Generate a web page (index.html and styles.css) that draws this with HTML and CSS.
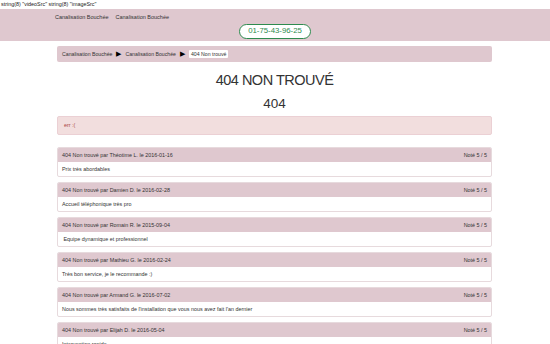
FILE: index.html
```html
<!DOCTYPE html>
<html lang="fr">
<head>
<meta charset="utf-8">
<link rel="stylesheet" href="styles.css">
</head>
<body>
<div class="debug">string(8) "videoSrc" string(8) "imageSrc"</div>
<header class="top">
  <nav class="nav">
    <a href="#">Canalisation Bouchée</a>
    <a href="#">Canalisation Bouchée</a>
  </nav>
  <div class="phone-row"><span class="phone">01-75-43-96-25</span></div>
</header>
<main class="container">
  <div class="crumbs">
    <a href="#">Canalisation Bouchée</a>
    <span class="sep">&#9654;</span>
    <a href="#">Canalisation Bouchée</a>
    <span class="sep">&#9654;</span>
    <span class="active">404 Non trouvé</span>
  </div>
  <h1 class="title">404 NON TROUVÉ</h1>
  <h2 class="code">404</h2>
  <div class="alert">err :(</div>

  <section class="panel">
    <div class="panel-head"><span>404 Non trouvé par Théotime L. le 2016-01-16</span><span>Noté 5 / 5</span></div>
    <div class="panel-body">Prix très abordables</div>
  </section>
  <section class="panel">
    <div class="panel-head"><span>404 Non trouvé par Damien D. le 2016-02-28</span><span>Noté 5 / 5</span></div>
    <div class="panel-body">Accueil téléphonique très pro</div>
  </section>
  <section class="panel">
    <div class="panel-head"><span>404 Non trouvé par Romain R. le 2015-09-04</span><span>Noté 5 / 5</span></div>
    <div class="panel-body">&nbsp;Equipe dynamique et professionnel</div>
  </section>
  <section class="panel">
    <div class="panel-head"><span>404 Non trouvé par Mathieu G. le 2016-02-24</span><span>Noté 5 / 5</span></div>
    <div class="panel-body">Très bon service, je le recommande :)</div>
  </section>
  <section class="panel">
    <div class="panel-head"><span>404 Non trouvé par Armand G. le 2016-07-02</span><span>Noté 5 / 5</span></div>
    <div class="panel-body">Nous sommes très satisfaits de l'installation que vous nous avez fait l'an dernier</div>
  </section>
  <section class="panel">
    <div class="panel-head"><span>404 Non trouvé par Elijah D. le 2016-05-04</span><span>Noté 5 / 5</span></div>
    <div class="panel-body">Intervention rapide</div>
  </section>
</main>
</body>
</html>
```
FILE: styles.css
```css
* { box-sizing: border-box; }
html, body { margin: 0; padding: 0; background: #fff; }
body {
  font-family: "Liberation Sans", Arial, sans-serif;
  font-size: 5.4px;
  color: #333;
  overflow: hidden;
}
a { color: #333; text-decoration: none; }
.debug {
  height: 9px;
  line-height: 8px;
  padding-left: 1px;
  font-size: 5.4px;
  color: #222;
}
.top {
  background: #dfc8cf;
  height: 32px;
  padding-top: 4px;
}
.nav {
  display: flex;
  gap: 7px;
  padding-left: 55px;
  height: 10px;
  line-height: 9px;
  font-size: 5.5px;
}
.nav a { color: #333; }
.phone-row {
  display: flex;
  justify-content: center;
  padding-top: 1px;
}
.phone {
  display: inline-block;
  border: 1.5px solid #2e8b4f;
  border-radius: 8px;
  color: #2e8b4f;
  font-size: 7.8px;
  height: 15px;
  line-height: 12px;
  padding: 0 8px;
  background: #fff;
}
.container {
  width: 435px;
  margin: 0 0 0 57px;
  padding-top: 5px;
}
.crumbs {
  background: #dfc8cf;
  border-radius: 2px;
  height: 16px;
  display: flex;
  align-items: center;
  padding-left: 5px;
  gap: 4px;
  font-size: 5.2px;
}
.crumbs .sep { font-size: 7px; color: #000; }
.crumbs .active {
  background: #fff;
  padding: 1px 2px;
  border-radius: 1px;
}
.title {
  margin: 0;
  padding-top: 9px;
  text-align: center;
  font-weight: 400;
  font-size: 14.5px;
  letter-spacing: -0.5px;
  line-height: 18px;
  color: #333;
}
.code {
  margin: 0;
  padding-top: 7px;
  text-align: center;
  font-weight: 400;
  font-size: 13.5px;
  line-height: 16px;
  color: #333;
}
.alert {
  margin-top: 4px;
  background: #f2dede;
  border: 1px solid #ebd0d4;
  border-radius: 2px;
  height: 19px;
  line-height: 17px;
  padding-left: 6px;
  color: #a94442;
  font-size: 5.4px;
  margin-bottom: 12px;
}
.panel {
  border: 1px solid #e7dadd;
  border-radius: 2px;
  margin-bottom: 5px;
  background: #fff;
  overflow: hidden;
}
.panel-head {
  background: #dfc8cf;
  height: 14px;
  line-height: 14px;
  display: flex;
  justify-content: space-between;
  padding: 0 4px 0 4px;
  font-size: 5.4px;
  color: #333;
}
.panel-body {
  height: 14px;
  line-height: 14px;
  padding-left: 4px;
  font-size: 5.4px;
  color: #333;
}
```
